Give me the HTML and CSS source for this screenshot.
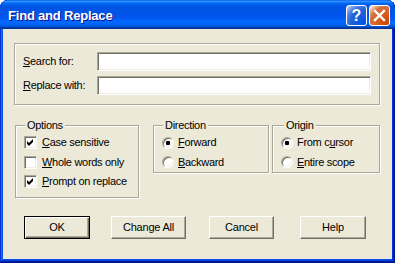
FILE: index.html
```html
<!DOCTYPE html>
<html>
<head>
<meta charset="utf-8">
<link rel="stylesheet" href="styles.css">
</head>
<body>
<div class="window">
  <div class="titlebar">
    <span class="title">Find and Replace</span>
    <div class="tbtns">
      <span class="tbtn help">?</span>
      <span class="tbtn close"><svg width="19" height="19" viewBox="0 0 19 19"><path d="M5 5L14 14M14 5L5 14" stroke="#fff" stroke-width="2.4" stroke-linecap="square"/></svg></span>
    </div>
  </div>
  <div class="client">
    <div class="searchbox">
      <div class="field-row"><span class="flabel"><u>S</u>earch for:</span><span class="input"></span></div>
      <div class="field-row"><span class="flabel"><u>R</u>eplace with:</span><span class="input"></span></div>
    </div>
    <div class="groups">
      <div class="group options">
        <span class="legend">Options</span>
        <div class="rows">
          <div class="opt"><span class="check"><svg width="11" height="11" viewBox="0 0 11 11"><polygon points="2,4 4,6 8,2 8,5 4,9 2,7" fill="#000"/></svg></span><span><u>C</u>ase sensitive</span></div>
          <div class="opt"><span class="check"></span><span><u>W</u>hole words only</span></div>
          <div class="opt"><span class="check"><svg width="11" height="11" viewBox="0 0 11 11"><polygon points="2,4 4,6 8,2 8,5 4,9 2,7" fill="#000"/></svg></span><span><u>P</u>rompt on replace</span></div>
        </div>
      </div>
      <div class="group direction">
        <span class="legend">Direction</span>
        <div class="rows">
          <div class="opt"><span class="radio on"></span><span><u>F</u>orward</span></div>
          <div class="opt"><span class="radio"></span><span><u>B</u>ackward</span></div>
        </div>
      </div>
      <div class="group origin">
        <span class="legend">Origin</span>
        <div class="rows">
          <div class="opt"><span class="radio on"></span><span>From c<u>u</u>rsor</span></div>
          <div class="opt"><span class="radio"></span><span><u>E</u>ntire scope</span></div>
        </div>
      </div>
    </div>
    <div class="buttons">
      <button class="btn default b-ok">OK</button>
      <button class="btn b-all">Change All</button>
      <button class="btn b-cancel">Cancel</button>
      <button class="btn b-help">Help</button>
    </div>
  </div>
</div>
</body>
</html>
```
FILE: styles.css
```css
* { box-sizing: border-box; }
html, body { margin: 0; padding: 0; }
body {
  width: 395px; height: 263px; overflow: hidden; background: #fff;
  font-family: "Liberation Sans", Arial, sans-serif; font-size: 11px; line-height: 13px;
  color: #000; letter-spacing: -0.3px;
}
.window {
  width: 395px; height: 263px; display: flex; flex-direction: column;
  background: #0055e8; border-radius: 8px 8px 0 0; overflow: hidden;
  box-shadow: inset -1px -1px #00138c, inset 1px 1px #0831d9, inset -2px -2px #001ea0, inset 2px 2px #166aee, inset -3px -3px #003bda, inset 3px 3px #0855dd;
}
.titlebar {
  height: 29px; flex: none; display: flex; align-items: center; padding: 2px 5px 0 8px;
  border-radius: 8px 8px 0 0;
  background: linear-gradient(to bottom, #0058ee 0%, #3593ff 4%, #288eff 6%, #127dff 8%, #036ffc 10%, #0262ee 14%, #0057e5 20%, #0054e3 24%, #0055eb 56%, #005bf5 66%, #026afe 76%, #0062ef 86%, #0052d6 92%, #0040ab 94%, #003092 100%);
}
.title {
  flex: 1; color: #fff; font-weight: bold; font-size: 13px; letter-spacing: -0.2px;
  text-shadow: 1px 1px #0f1089;
}
.tbtns { display: flex; gap: 2px; }
.tbtn {
  width: 21px; height: 21px; border: 1px solid #fff; border-radius: 3px;
  display: flex; align-items: center; justify-content: center;
}
.help {
  color: #fff; font-weight: bold; font-size: 16px; letter-spacing: 0;
  background: radial-gradient(circle at 90% 90%, #0054e9 0%, #2263d5 55%, #4479e4 70%, #a3bbec 90%, #fff 100%);
}
.close {
  background: radial-gradient(circle at 90% 90%, #cc4600 0%, #dc6527 55%, #cd7546 70%, #ffccb2 90%, #fff 100%);
}
.client {
  flex: 1; margin: 0 3px 4px; background: #ece9d8;
  padding: 14px 12px 0 11px; display: flex; flex-direction: column;
}
.searchbox {
  height: 62px; border: 1px solid #aca899; box-shadow: 1px 1px #fff, inset 1px 1px #fff;
  padding: 8px 8px 0; display: flex; flex-direction: column; gap: 5px;
}
.field-row { display: flex; align-items: center; }
.flabel { width: 74px; flex: none; }
.input {
  flex: 1; height: 19px; background: #fff; border: 1px solid;
  border-color: #aca899 #fff #fff #aca899;
  box-shadow: inset 1px 1px #716f64, inset -1px -1px #f1efe2;
}
.groups { display: flex; align-items: flex-start; margin-top: 20px; }
.group {
  border: 1px solid #aca899; box-shadow: 1px 1px #fff, inset 1px 1px #fff;
  display: flex; flex-direction: column; align-items: flex-start; padding: 0 8px;
}
.legend { margin: -7px 0 0 1px; padding: 0 2px; background: #ece9d8; line-height: 13px; }
.rows { margin-top: 1px; display: flex; flex-direction: column; }
.opt { display: flex; align-items: center; height: 19.5px; }
.options { width: 124px; margin-left: 1px; padding-bottom: 5.5px; }
.direction { width: 116px; margin-left: 14px; }
.origin { width: 108px; margin-left: 3px; }
.origin .legend { margin-left: 3px; }
.check {
  width: 13px; height: 13px; flex: none; margin-right: 5px; background: #fff;
  border: 1px solid; border-color: #aca899 #fff #fff #aca899;
  box-shadow: inset 1px 1px #716f64, inset -1px -1px #f1efe2;
  display: flex;
}
.check svg { display: block; margin: 0; }
.radio {
  width: 12px; height: 12px; flex: none; margin-right: 4px; border-radius: 50%;
  border: 1px solid; border-color: #aca899 #fff #fff #aca899;
  box-shadow: inset 1px 1px #716f64, inset -1px -1px #f1efe2;
  background: #fff;
}
.radio.on { background: radial-gradient(circle, #000 0, #000 2px, #fff 2.6px); }
.buttons { display: flex; margin-top: 18px; }
.btn {
  height: 23px; padding: 0; font: inherit; letter-spacing: -0.2px; color: #000;
  background: #ece9d8; border: 1px solid; border-color: #fff #716f64 #716f64 #fff;
  box-shadow: inset -1px -1px #aca899;
}
.btn.default {
  border-color: #000;
  box-shadow: inset 1px 1px #fff, inset -1px -1px #716f64, inset -2px -2px #aca899;
}
.b-ok { width: 66px; margin-left: 10px; }
.b-all { width: 75px; margin-left: 21px; }
.b-cancel { width: 65px; margin-left: 23px; }
.b-help { width: 66px; margin-left: 26px; }
```
